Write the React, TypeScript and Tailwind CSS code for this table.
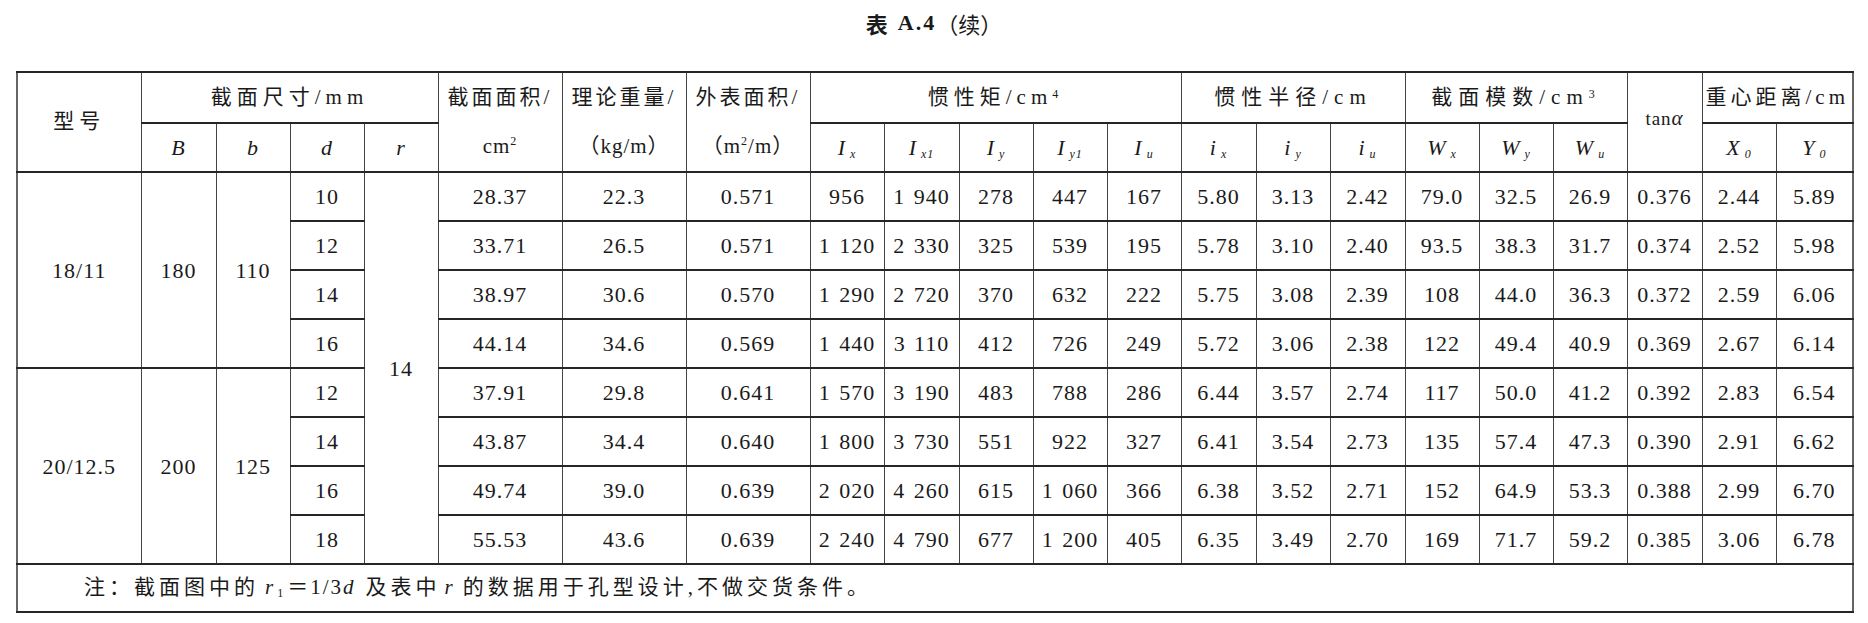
import React from "react";

const cols = [124, 75, 74, 74, 74, 124, 124, 124, 74, 75, 74, 74, 74, 75, 74, 75, 74, 74, 74, 75, 74, 77];

type Row = { d: string; vals: string[] };

const group1: Row[] = [
  { d: "10", vals: ["28.37", "22.3", "0.571", "956", "1\u2004940", "278", "447", "167", "5.80", "3.13", "2.42", "79.0", "32.5", "26.9", "0.376", "2.44", "5.89"] },
  { d: "12", vals: ["33.71", "26.5", "0.571", "1\u2004120", "2\u2004330", "325", "539", "195", "5.78", "3.10", "2.40", "93.5", "38.3", "31.7", "0.374", "2.52", "5.98"] },
  { d: "14", vals: ["38.97", "30.6", "0.570", "1\u2004290", "2\u2004720", "370", "632", "222", "5.75", "3.08", "2.39", "108", "44.0", "36.3", "0.372", "2.59", "6.06"] },
  { d: "16", vals: ["44.14", "34.6", "0.569", "1\u2004440", "3\u2004110", "412", "726", "249", "5.72", "3.06", "2.38", "122", "49.4", "40.9", "0.369", "2.67", "6.14"] },
];

const group2: Row[] = [
  { d: "12", vals: ["37.91", "29.8", "0.641", "1\u2004570", "3\u2004190", "483", "788", "286", "6.44", "3.57", "2.74", "117", "50.0", "41.2", "0.392", "2.83", "6.54"] },
  { d: "14", vals: ["43.87", "34.4", "0.640", "1\u2004800", "3\u2004730", "551", "922", "327", "6.41", "3.54", "2.73", "135", "57.4", "47.3", "0.390", "2.91", "6.62"] },
  { d: "16", vals: ["49.74", "39.0", "0.639", "2\u2004020", "4\u2004260", "615", "1\u2004060", "366", "6.38", "3.52", "2.71", "152", "64.9", "53.3", "0.388", "2.99", "6.70"] },
  { d: "18", vals: ["55.53", "43.6", "0.639", "2\u2004240", "4\u2004790", "677", "1\u2004200", "405", "6.35", "3.49", "2.70", "169", "71.7", "59.2", "0.385", "3.06", "6.78"] },
];

const cell = "border-x border-y-2 border-x-[#444] border-y-[#262626] p-0 text-center align-middle";

function Sym({ main, sub }: { main: string; sub: string }) {
  return (
    <span className="italic">
      {main}
      <sub className="ml-[4px] text-[12px]">{sub}</sub>
    </span>
  );
}

function DataRows({ rows, label, B, b, first }: { rows: Row[]; label: string; B: string; b: string; first: boolean }) {
  return (
    <>
      {rows.map((r, i) => (
        <tr key={r.d + i} className="h-[49px]">
          {i === 0 && (
            <>
              <td rowSpan={4} className={cell}>{label}</td>
              <td rowSpan={4} className={cell}>{B}</td>
              <td rowSpan={4} className={cell}>{b}</td>
            </>
          )}
          <td className={cell}>{r.d}</td>
          {first && i === 0 && (
            <td rowSpan={8} className={cell}>14</td>
          )}
          {r.vals.map((v, j) => (
            <td key={j} className={cell}>{v}</td>
          ))}
        </tr>
      ))}
    </>
  );
}

export default function App() {
  return (
    <div className="min-h-[623px] w-[1868px] bg-white font-['Liberation_Serif','Noto_Sans_CJK_SC',serif] text-[#1a1a1a]">
      <div className="flex h-[71px] items-start justify-center pt-[10px] text-[22px] leading-[26px]">
        <span className="font-bold font-['Noto_Sans_CJK_SC',sans-serif]">表</span>
        <span className="ml-[10px] font-bold tracking-[2px]">A.4</span>
        <span className="font-['Noto_Sans_CJK_SC',sans-serif]">（续）</span>
      </div>
      <div className="pl-[16px]">
        <table className="table-fixed border-collapse border-x-2 border-t-2 border-b-2 border-x-[#666] border-t-[#222] border-b-[#222] text-[22px] tracking-[1px]">
          <colgroup>
            {cols.map((w, i) => (
              <col key={i} style={{ width: w }} />
            ))}
          </colgroup>
          <thead className="text-[21px] font-normal">
            <tr className="h-[50px]">
              <th rowSpan={2} className={`${cell} font-normal tracking-[5px]`}>型号</th>
              <th colSpan={4} className={`${cell} font-normal tracking-[5px]`}>截面尺寸/mm</th>
              <th rowSpan={2} className={`${cell} font-normal`}>
                <div className="flex h-[49px] items-center justify-center tracking-[3px]">截面面积/</div>
                <div className="flex h-[49px] items-center justify-center">cm<sup className="text-[12px]">2</sup></div>
              </th>
              <th rowSpan={2} className={`${cell} font-normal`}>
                <div className="flex h-[49px] items-center justify-center tracking-[3px]">理论重量/</div>
                <div className="flex h-[49px] items-center justify-center">（kg/m）</div>
              </th>
              <th rowSpan={2} className={`${cell} font-normal`}>
                <div className="flex h-[49px] items-center justify-center tracking-[3px]">外表面积/</div>
                <div className="flex h-[49px] items-center justify-center">（m<sup className="text-[12px]">2</sup>/m）</div>
              </th>
              <th colSpan={5} className={`${cell} font-normal tracking-[5px]`}>惯性矩/cm<sup className="text-[12px]">4</sup></th>
              <th colSpan={3} className={`${cell} font-normal tracking-[6px]`}>惯性半径/cm</th>
              <th colSpan={3} className={`${cell} font-normal tracking-[6px]`}>截面模数/cm<sup className="text-[12px]">3</sup></th>
              <th rowSpan={2} className={`${cell} pb-[6px] font-normal`}>
                <span className="text-[19px]">tan</span>
                <span className="italic">α</span>
              </th>
              <th colSpan={2} className={`${cell} font-normal tracking-[4px]`}>重心距离/cm</th>
            </tr>
            <tr className="h-[49px] text-[22px]">
              <th className={`${cell} font-normal italic`}>B</th>
              <th className={`${cell} font-normal italic`}>b</th>
              <th className={`${cell} font-normal italic`}>d</th>
              <th className={`${cell} font-normal italic`}>r</th>
              <th className={`${cell} font-normal`}><Sym main="I" sub="x" /></th>
              <th className={`${cell} font-normal`}><Sym main="I" sub="x1" /></th>
              <th className={`${cell} font-normal`}><Sym main="I" sub="y" /></th>
              <th className={`${cell} font-normal`}><Sym main="I" sub="y1" /></th>
              <th className={`${cell} font-normal`}><Sym main="I" sub="u" /></th>
              <th className={`${cell} font-normal`}><Sym main="i" sub="x" /></th>
              <th className={`${cell} font-normal`}><Sym main="i" sub="y" /></th>
              <th className={`${cell} font-normal`}><Sym main="i" sub="u" /></th>
              <th className={`${cell} font-normal`}><Sym main="W" sub="x" /></th>
              <th className={`${cell} font-normal`}><Sym main="W" sub="y" /></th>
              <th className={`${cell} font-normal`}><Sym main="W" sub="u" /></th>
              <th className={`${cell} font-normal`}><Sym main="X" sub="0" /></th>
              <th className={`${cell} font-normal`}><Sym main="Y" sub="0" /></th>
            </tr>
          </thead>
          <tbody>
            <DataRows rows={group1} label="18/11" B="180" b="110" first />
            <DataRows rows={group2} label="20/12.5" B="200" b="125" first={false} />
            <tr className="h-[48px]">
              <td colSpan={22} className={`${cell} pl-[66px] text-left text-[21px] tracking-[4px]`}>
                注：截面图中的
                <span className="ml-[6px] italic">r</span>
                <sub className="text-[12px]">1</sub>
                <span className="tracking-[2px]">＝1/3<span className="italic">d</span></span>
                <span className="ml-[10px]">及表中</span>
                <span className="ml-[4px] italic">r</span>
                <span className="ml-[6px]">的数据用于孔型设计,不做交货条件。</span>
              </td>
            </tr>
          </tbody>
        </table>
      </div>
    </div>
  );
}
